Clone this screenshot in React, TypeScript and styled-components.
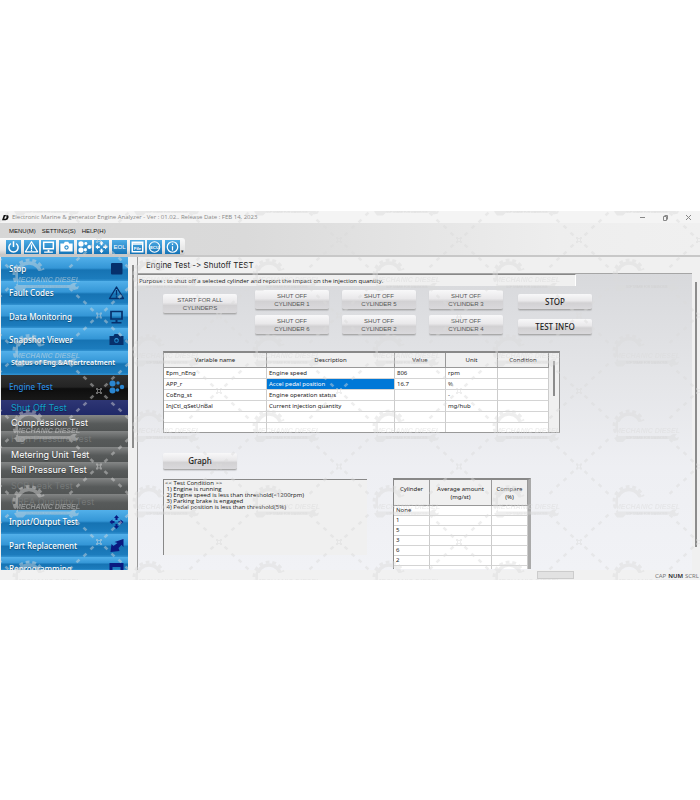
import React from "react";
import styled, { createGlobalStyle } from "styled-components";

const GlobalStyle = createGlobalStyle`
  * { box-sizing: border-box; }
  body { margin: 0; background: #fff; }
  button, input, textarea { font-family: inherit; margin: 0; border-radius: 0; }
  button { cursor: pointer; }
`;

const Page = styled.div`
  padding-top: 211px;
  font-family: "Noto Sans", "Open Sans", sans-serif;
  font-size: 6px;
  color: #222;
`;

const AppWindow = styled.div`
  position: relative;
  display: flex;
  flex-direction: column;
  overflow: hidden;
  background: #f0f0f0;
`;

const TitleBar = styled.header`
  display: flex;
  align-items: center;
  height: 12px;
  background: #f4f4f4;
  color: #888;
`;

const TitleText = styled.h1`
  flex: 1;
  margin: 0 0 0 3px;
  font-size: 6px;
  line-height: 12px;
  font-weight: 400;
  font-family: "Open Sans", sans-serif;
`;

const TitleLogo = styled.svg`
  width: 7px;
  height: 7px;
  margin-left: 2px;
`;

const WindowButton = styled.button`
  width: 23px;
  height: 12px;
  padding: 0;
  border: 0;
  background: none;
  color: #888;
  line-height: 0;
`;

const TopArea = styled.div`
  background: linear-gradient(90deg, #d6d6d6 0, #dadada 35%, #eeeeee 80%, #f0f0f0);
  border-bottom: 2px solid #c8c8c8;
`;

const MenuBar = styled.nav`
  display: flex;
  gap: 6px;
  height: 15px;
  padding: 0 0 0 9px;
`;

const MenuButton = styled.button`
  padding: 0;
  border: 0;
  background: none;
  color: #111;
  font-family: "Liberation Sans", sans-serif;
  font-size: 6px;
  line-height: 16px;
`;

const Toolbar = styled.div`
  display: flex;
  align-items: center;
  width: 185px;
  height: 17px;
  padding: 0 1px 0 6px;
  border-radius: 0 3px 3px 0;
  background: linear-gradient(#fafafa, #e6e6e6 70%, #c4c4c4);
`;

const ToolGroup = styled.div`
  display: flex;
  flex: 1;
  justify-content: space-between;
`;

const ToolButton = styled.button`
  width: 15px;
  height: 14px;
  padding: 0;
  border: 0;
  background: linear-gradient(#4fade6, #1473b6);
  line-height: 0;
`;

const MoreTools = styled.span`
  align-self: flex-end;
  margin-left: 1px;
  font-size: 5px;
  line-height: 7px;
`;

const Body = styled.div`
  display: flex;
  align-items: stretch;
`;

const Sidebar = styled.nav`
  flex: 0 0 127px;
  margin-left: 1px;
  display: flex;
  flex-direction: column;
  overflow: hidden;
`;

type Tone = "blue" | "dark" | "selected" | "grey" | "disabled";

const toneBackground: Record<Tone, string> = {
  blue: "linear-gradient(#52b0ea, #3496d6 46%, #1673b3 54%, #1c7cbd 90%, #3393d2)",
  dark: "linear-gradient(#303030, #242424 48%, #0e0e0e 55%, #181818)",
  selected: "linear-gradient(#2e3674, #202968)",
  grey: "linear-gradient(#858787, #575a5a 55%, #505353)",
  disabled: "linear-gradient(#838585, #575a5a 55%, #535656)",
};

const toneColor: Record<Tone, string> = {
  blue: "#fff",
  dark: "#2b8be0",
  selected: "#12a0c8",
  grey: "#fff",
  disabled: "#757878",
};

const SideButton = styled.button<{ $tone: Tone; $h: number; $compact?: boolean }>`
  display: flex;
  flex: none;
  align-items: flex-start;
  justify-content: space-between;
  height: ${(p) => p.$h}px;
  overflow: hidden;
  padding: 0 3px 0 ${(p) => (p.$compact ? 10 : 8)}px;
  border: 0;
  background: ${(p) => toneBackground[p.$tone]};
  color: ${(p) => toneColor[p.$tone]};
  text-align: left;
  white-space: nowrap;
  font-weight: ${(p) => (p.$compact ? 600 : 500)};
  font-size: ${(p) => (p.$compact ? 7 : 8)}px;
  line-height: 24px;
  text-shadow: ${(p) => (p.$tone === "disabled" ? "none" : "0 1px 1px rgba(0, 0, 0, 0.35)")};
`;

const SubButton = styled(SideButton)`
  padding-left: 10px;
  font-family: Inter, "Liberation Sans", sans-serif;
  font-size: 9px;
  font-weight: 400;
  line-height: ${(p) => p.$h}px;
`;

const SideIcon = styled.svg`
  flex: none;
  width: 17px;
  height: 16px;
  margin-top: 4px;
`;

const ScrollRail = styled.div<{ $w: number; $top: number; $len: number }>`
  flex: 0 0 ${(p) => p.$w}px;
  padding-top: ${(p) => p.$top}px;
  background: #f0f0f0;

  &::before {
    content: "";
    display: block;
    width: 2px;
    height: ${(p) => p.$len}px;
    margin: 0 auto;
    background: #8c8c8c;
  }
`;

const Main = styled.main`
  flex: 1;
  min-width: 0;
  display: flex;
  flex-direction: column;
  border-left: 1px solid #999;
`;

const Heading = styled.h2`
  margin: 0;
  padding-left: 8px;
  border-bottom: 1px solid #a5a5a5;
  background: #f0f0f0;
  font-family: Inter, "Liberation Sans", sans-serif;
  font-feature-settings: "calt" 0;
  font-size: 8px;
  font-weight: 400;
  line-height: 16px;
`;

const Content = styled.div`
  flex: 1;
  background: linear-gradient(#d8d9dc, #e4e5e8 35%, #eeeff3 65%, #f1f2f6);
`;

const Purpose = styled.input`
  display: block;
  width: 79%;
  height: 12px;
  padding: 0 0 0 1px;
  border: 0;
  border-top: 1px solid #888;
  border-right: 1px solid #fff;
  background: #f0f0f0;
  color: #111;
  font-family: "Open Sans", sans-serif;
  font-size: 6px;
`;

const Panel = styled.div`
  padding: 4px 0 0 25px;
`;

const Actions = styled.div`
  display: flex;
  align-items: flex-start;
  gap: 15px;
`;

const CylinderGrid = styled.div`
  display: grid;
  grid-template-columns: repeat(3, auto);
  gap: 5px 13px;
  margin-left: 3px;
`;

const ActionColumn = styled.div`
  display: flex;
  flex-direction: column;
  gap: 9px;
  padding-top: 4px;
`;

const PushButton = styled.button<{ $large?: boolean }>`
  display: block;
  width: 74px;
  height: ${(p) => (p.$large ? 16 : 20)}px;
  padding: 0;
  border: 0;
  border-bottom: 1px solid #aaa;
  border-radius: 2px;
  background: linear-gradient(#f8f8f9, #e9e8ea 45%, #d2d1d3 60%, #dad9dc);
  box-shadow: 0 1px 1px rgba(0, 0, 0, 0.12);
  color: ${(p) => (p.$large ? "#222" : "#555")};
  font-family: ${(p) => (p.$large ? `"Noto Sans"` : `"Liberation Sans"`)}, sans-serif;
  font-size: ${(p) => (p.$large ? 8 : 6)}px;
  font-weight: ${(p) => (p.$large ? 500 : 400)};
  line-height: 8px;
  white-space: pre-line;
`;

const TableFrame = styled.div`
  display: flex;
  width: 397px;
  margin-top: 16px;
  border: 1px solid #999;
  border-top: 2px solid #888;
  background: #f0f0f0;
`;

const DataTable = styled.table<{ $row: number; $head: number; $last: number }>`
  flex: 1;
  table-layout: fixed;
  border-collapse: separate;
  border-spacing: 0;
  background: #fff;

  th, td {
    padding: 0 0 0 2px;
    overflow: hidden;
    white-space: pre-line;
    font-weight: 400;
    text-align: left;
    border-right: 1px solid #ccc;
    border-bottom: 1px solid #d4d4d4;
  }
  th {
    height: ${(p) => p.$head}px;
    padding: 0;
    background: #f0f0f0;
    border-color: #999;
    text-align: center;
    line-height: 8px;
  }
  td {
    height: ${(p) => p.$row}px;
    line-height: ${(p) => p.$row - 1}px;
  }
  tr:last-child td {
    height: ${(p) => p.$last}px;
    border-bottom: 0;
  }
  td.active {
    background: #0078d7;
    color: #fff;
  }
`;

const GraphButton = styled(PushButton)`
  height: 17px;
  margin-top: 20px;
`;

const Lower = styled.div`
  display: flex;
  align-items: flex-start;
  gap: 26px;
  padding-top: 8px;
`;

const Condition = styled.textarea`
  display: block;
  width: 204px;
  height: 76px;
  margin-top: 1px;
  padding: 0 1px;
  border: 0;
  border-top: 1px solid #888;
  border-left: 1px solid #888;
  resize: none;
  overflow: hidden;
  background: #f0f0f0;
  color: #111;
  font-family: "Open Sans", sans-serif;
  font-size: 6px;
  line-height: 6px;
`;

const CylinderFrame = styled.div`
  display: flex;
  width: 138px;
  border: 1px solid #888;
  border-top-width: 2px;
  border-right: 3px solid #aaa;
  border-bottom: 0;
`;

const StatusBar = styled.footer`
  display: flex;
  justify-content: flex-end;
  height: 10px;
  padding-right: 1px;
  background: #f1f1f1;
  color: #777;
  font-size: 6px;
  line-height: 12px;
`;

const StatusCell = styled.span<{ $on?: boolean }>`
  margin-left: 2px;
  color: ${(p) => (p.$on ? "#222" : "#777")};
  font-weight: ${(p) => (p.$on ? 600 : 400)};
`;

const StatusSlot = styled.span`
  width: 37px;
  height: 8px;
  margin: 1px 79px 0 0;
  border: 1px solid #ccc;
  background: #e2e2e2;
`;

const Watermark = styled.svg`
  position: absolute;
  inset: 0;
  width: 100%;
  height: 100%;
  pointer-events: none;
`;

const dashOffsets: [number, number][] = [[7, 6], [14, 13], [21, 19], [28, 26]];

const WatermarkTile = () => (
  <g fill="#dadada" stroke="none">
    {[[1, 1], [1, -1], [-1, 1], [-1, -1]].map(([sx, sy]) =>
      dashOffsets.map(([x, y]) => (
        <rect
          key={`${sx}${sy}${x}`}
          x={-2}
          y={-1.3}
          width={4}
          height={2.6}
          transform={`translate(${99 + sx * x} ${29 + sy * y}) rotate(${sx * sy * 43})`}
        />
      ))
    )}
    <path d="M96 26h2v1h2v-1h2v2h-1v2h1v2h-2v-1h-2v1h-2v-2h1v-2h-1zM98 28v2h2v-2z" fillRule="evenodd" />
    <circle cx="29" cy="64" r="15" fill="none" stroke="#dadada" strokeWidth="3" strokeDasharray="4 3" pathLength="98" clipPath="url(#gearArc)" />
    <circle cx="29" cy="64" r="12" fill="none" stroke="#dadada" strokeWidth="3.5" clipPath="url(#gearArc)" />
    <text x="15" y="71" fontFamily="Liberation Sans, sans-serif" fontWeight="700" fontStyle="italic" fontSize="7">MECHANIC DIESEL</text>
    <path d="M18 74h52l3-2h4l-2 2 1 2 3-1-1 3-4 1-4-2H26l-3 3h-6l-3-4z" />
    <text x="26" y="77" fill="#c4c4c4" fontFamily="Liberation Sans, sans-serif" fontSize="3">SOFTWARE FOR DIAGNOSIS</text>
  </g>
);

type IconName =
  | "power" | "warn" | "monitor" | "camera" | "parts" | "arrows"
  | "eol" | "file" | "ecu" | "info" | "square" | "swap" | "panel";

const Glyph = ({ name, c }: { name: IconName; c: string }) => {
  const s = { fill: "none", stroke: c, strokeWidth: 1.7 };
  switch (name) {
    case "power":
      return <g {...s}><path d="M5 4a5.300 5.300 0 1 0 6 0M8 1.500v6.500" /></g>;
    case "warn":
      return <g {...s} strokeWidth={1.4}><path d="M8 2 15 13.500H1zM8 5v5.500M8 11.200v1.300" strokeLinejoin="round" /></g>;
    case "monitor":
      return <g><path d="M2.500 2.500h11V10h-11z" {...s} /><path d="M7 11h2v2h4v1.500H3V13h4z" fill={c} /></g>;
    case "camera":
      return <path d="M1 4h4l1-2h4l1 2h4v9H1zM8 6a2.500 2.500 0 1 0 .01 0zM8 7.300a1.200 1.200 0 1 1-.01 0z" fill={c} fillRule="evenodd" />;
    case "parts":
      return <g fill={c}><circle cx="4" cy="4.5" r="3" /><circle cx="4" cy="11.5" r="3" /><circle cx="9.5" cy="4" r="1.7" /><circle cx="9" cy="11" r="1.8" /><circle cx="13.5" cy="8" r="2.2" /></g>;
    case "arrows":
      return <path d="M8 1l2.500 3H9v2H7V4H5.500zM8 15l2.500-3H9v-2H7v2H5.500zM1 8l3-2.500V7h2v2H4v1.500zM15 8l-3-2.500V7h-2v2h2v1.500z" fill={c} />;
    case "eol":
      return <text x="8" y="10.500" textAnchor="middle" fontFamily="Liberation Sans, sans-serif" fontSize="7" fill={c}>EOL</text>;
    case "file":
      return <g><path d="M2 2.500h12v11H2zM2 4.500h12" {...s} /><text x="8" y="11.500" textAnchor="middle" fontFamily="Liberation Sans, sans-serif" fontWeight="700" fontSize="5" fill={c}>File</text></g>;
    case "ecu":
      return <g><circle cx="8" cy="8" r="6" {...s} strokeWidth={1.2} /><text x="8" y="10" textAnchor="middle" fontFamily="Liberation Sans, sans-serif" fontWeight="700" fontSize="5" fill={c}>ECU</text></g>;
    case "info":
      return <g {...s} strokeWidth={1.4}><circle cx="8" cy="8" r="6" /><path d="M8 7v5M8 4v1.600" /></g>;
    case "square":
      return <rect x="2.5" y="2" width="11.5" height="11.5" rx="1" fill={c} />;
    case "swap":
      return <path d="M6 4 15 1v8l-2-2-3 3 1 3-9 1 1-8 2 2 4-3z" fill={c} />;
    case "panel":
      return <path d="M1 2h14v12H1zM4 6v6h8V6z" fill={c} fillRule="evenodd" />;
  }
};

const tools: [IconName, string][] = [
  ["power", "Power"], ["warn", "Fault codes"], ["monitor", "Data monitoring"], ["camera", "Snapshot"],
  ["parts", "Engine test"], ["arrows", "Input/Output"], ["eol", "EOL"], ["file", "File"], ["ecu", "ECU"], ["info", "Info"],
];

const topItems: [string, number, IconName | null][] = [
  ["Stop", 24, "square"], ["Fault Codes", 24, "warn"], ["Data Monitoring", 23, "monitor"],
  ["Snapshot Viewer", 23, "camera"], ["Status of Eng.&Aftertreatment", 24, null],
];

const subItems: [string, number, Tone][] = [
  ["Shut Off Test", 15, "selected"], ["Compression Test", 16, "grey"], ["High Pressure Test", 16, "disabled"],
  ["Metering Unit Test", 15, "grey"], ["Rail Pressure Test", 16, "grey"], ["SCR Leak Test", 16, "disabled"],
  ["UREA Quantity Test", 16, "disabled"],
];

const bottomItems: [string, number, IconName][] = [
  ["Input/Output Test", 24, "arrows"], ["Part Replacement", 23, "swap"], ["Reprogramming", 13, "panel"],
];

const variables = [
  ["Epm_nEng", "Engine speed", "806", "rpm", ""],
  ["APP_r", "Accel pedal position", "16.7", "%", ""],
  ["CoEng_st", "Engine operation status", "", "-", ""],
  ["InjCtl_qSetUnBal", "Current injection quantity", "", "mg/hub", ""],
  ["", "", "", "", ""],
  ["", "", "", "", ""],
];

const conditionText = `<< Test Condition >>
 1) Engine is running
 2) Engine speed is less than threshold(<1200rpm)
 3) Parking brake is engaged
 4) Pedal position is less than threshold(5%)`;

export default function App() {
  return (
    <Page>
      <GlobalStyle />
      <AppWindow>
        <TitleBar>
          <TitleLogo viewBox="0 0 8 8"><path d="M2 1h4q2 0 1.500 3T4 7H0zM3.500 2.500l-1 3h1.200q1 0 1.400-1.500T4.800 2.500z" fill="#111" fillRule="evenodd" /></TitleLogo>
          <TitleText>Electronic Marine &amp; generator Engine Analyzer - Ver : 01.02.. Release Date : FEB 14, 2023</TitleText>
          <WindowButton aria-label="Minimize"><svg width="7" height="7"><path d="M1 3.500h5" stroke="currentColor" /></svg></WindowButton>
          <WindowButton aria-label="Restore"><svg width="7" height="7"><path d="M1.500 2.500h3v4h-3zM2.500 1.500h3v4" fill="none" stroke="currentColor" /></svg></WindowButton>
          <WindowButton aria-label="Close"><svg width="7" height="7"><path d="M1 1l5 5M6 1 1 6" stroke="currentColor" /></svg></WindowButton>
        </TitleBar>

        <TopArea>
          <MenuBar>
            <MenuButton>MENU(M)</MenuButton>
            <MenuButton>SETTING(S)</MenuButton>
            <MenuButton>HELP(H)</MenuButton>
          </MenuBar>
          <Toolbar>
            <ToolGroup>
              {tools.map(([icon, label]) => (
                <ToolButton key={label} aria-label={label}>
                  <svg width="15" height="14" viewBox="0 0 16 16"><Glyph name={icon} c="#fff" /></svg>
                </ToolButton>
              ))}
            </ToolGroup>
            <MoreTools>▾</MoreTools>
          </Toolbar>
        </TopArea>

        <Body>
          <Sidebar>
            {topItems.map(([label, h, icon]) => (
              <SideButton key={label} $tone="blue" $h={h} $compact={!icon}>
                {label}
                {icon && <SideIcon viewBox="0 0 16 16"><Glyph name={icon} c="#06306c" /></SideIcon>}
              </SideButton>
            ))}
            <SideButton $tone="dark" $h={25}>
              Engine Test
              <SideIcon viewBox="0 0 16 16"><Glyph name="parts" c="#2b86d0" /></SideIcon>
            </SideButton>
            {subItems.map(([label, h, tone]) => (
              <SubButton key={label} $tone={tone} $h={h} disabled={tone === "disabled"}>{label}</SubButton>
            ))}
            {bottomItems.map(([label, h, icon]) => (
              <SideButton key={label} $tone="blue" $h={h}>
                {label}
                <SideIcon viewBox="0 0 16 16"><Glyph name={icon} c="#0a1a80" /></SideIcon>
              </SideButton>
            ))}
          </Sidebar>
          <ScrollRail $w={9} $top={8} $len={183} />

          <Main>
            <Heading>Engine Test -&gt; Shutoff TEST</Heading>
            <Content>
              <Purpose
                readOnly
                aria-label="Purpose"
                value="Purpose : to shut off a selected cylinder and report the impact on the injection quantity."
              />
              <Panel>
                <Actions>
                  <ActionColumn>
                    <PushButton>{"START FOR ALL\nCYLINDERS"}</PushButton>
                  </ActionColumn>
                  <CylinderGrid>
                    {[1, 5, 3, 6, 2, 4].map((n) => (
                      <PushButton key={n}>{`SHUT OFF\nCYLINDER ${n}`}</PushButton>
                    ))}
                  </CylinderGrid>
                  <ActionColumn>
                    <PushButton $large>STOP</PushButton>
                    <PushButton $large>TEST INFO</PushButton>
                  </ActionColumn>
                </Actions>

                <TableFrame>
                  <DataTable $row={11} $head={15} $last={9}>
                    <colgroup><col width="103" /><col width="128" /><col width="51" /><col width="52" /><col width="51" /></colgroup>
                    <thead>
                      <tr>{["Variable name", "Description", "Value", "Unit", "Condition"].map((h) => <th key={h}>{h}</th>)}</tr>
                    </thead>
                    <tbody>
                      {variables.map((row, r) => (
                        <tr key={r}>{row.map((v, i) => <td key={i} className={r === 1 && i === 1 ? "active" : undefined}>{v}</td>)}</tr>
                      ))}
                    </tbody>
                  </DataTable>
                  <ScrollRail $w={10} $top={8} $len={35} />
                </TableFrame>

                <GraphButton $large>Graph</GraphButton>

                <Lower>
                  <Condition readOnly aria-label="Test condition" value={conditionText} />
                  <CylinderFrame>
                    <DataTable $row={10} $head={26} $last={3}>
                      <colgroup><col width="36" /><col width="62" /><col width="36" /></colgroup>
                      <thead>
                        <tr>{["Cylinder\n\u00a0", "Average amount\n(mg/st)", "Compare\n(%)"].map((h) => <th key={h}>{h}</th>)}</tr>
                      </thead>
                      <tbody>
                        {["None", "1", "5", "3", "6", "2", ""].map((n) => (
                          <tr key={n}><td>{n}</td><td /><td /></tr>
                        ))}
                      </tbody>
                    </DataTable>
                  </CylinderFrame>
                </Lower>
              </Panel>
            </Content>
          </Main>
          <ScrollRail $w={8} $top={25} $len={265} />
        </Body>

        <StatusBar>
          <StatusSlot />
          <StatusCell>CAP</StatusCell>
          <StatusCell $on>NUM</StatusCell>
          <StatusCell>SCRL</StatusCell>
        </StatusBar>

        <Watermark aria-hidden="true">
          <defs>
            <clipPath id="gearArc"><path d="M8 44h44v12L40 60H18v20H8z" /></clipPath>
            <pattern id="mark" width="120" height="151" patternUnits="userSpaceOnUse">
              <g transform="translate(0 -151)"><WatermarkTile /></g>
              <g transform="translate(0 -75.500)"><WatermarkTile /></g>
              <WatermarkTile />
              <g transform="translate(0 75.500)"><WatermarkTile /></g>
              <g transform="translate(-120 0)"><WatermarkTile /></g>
              <g transform="translate(-120 75.500)"><WatermarkTile /></g>
            </pattern>
          </defs>
          <rect width="100%" height="100%" fill="url(#mark)" opacity="0.45" />
        </Watermark>
      </AppWindow>
    </Page>
  );
}
